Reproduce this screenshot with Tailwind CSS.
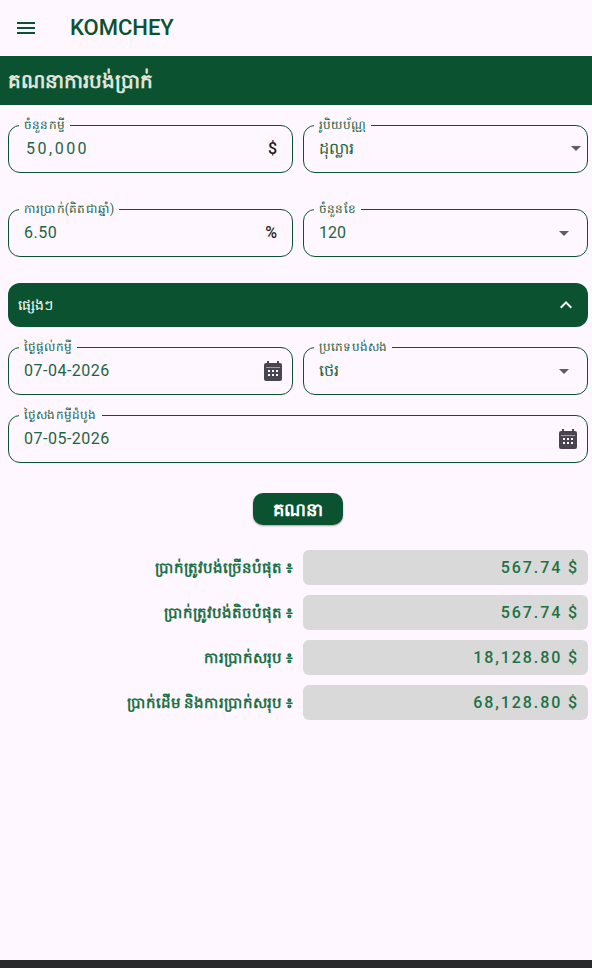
<!DOCTYPE html>
<html lang="km">
<head>
<meta charset="utf-8">
<script src="https://cdn.jsdelivr.net/npm/@tailwindcss/browser@4"></script>
</head>
<body class="bg-[#fef7ff] font-[Roboto,'Noto_Sans',sans-serif]">
<div class="w-[592px] h-[968px] flex flex-col overflow-hidden">
  <header class="h-14 flex items-center shrink-0">
    <svg class="w-6 h-6 ml-[14px] text-[#0b5330]" viewBox="0 0 24 24" fill="currentColor"><path d="M3 18h18v-2H3v2zm0-5h18v-2H3v2zm0-7v2h18V6H3z"/></svg>
    <span class="ml-[32px] -mt-[2px] text-[22px] font-medium text-[#0b5330]">KOMCHEY</span>
  </header>
  <div class="h-[49px] bg-[#0b5330] flex items-center pl-2 shrink-0 text-[20px] font-bold text-[#dfe3dc]">គណនាការបង់ប្រាក់</div>

  <div class="flex-1 pl-2 pr-1 flex flex-col">
    <div class="grid grid-cols-2 gap-x-[10px] mt-5">
      <div class="relative h-12 border border-[#0b5330] rounded-xl flex items-center pl-[17px] pr-[15px]">
        <span class="absolute left-[10px] -top-[9px] px-[5px] bg-[#fef7ff] text-[12px] tracking-[0.2px] leading-4 text-[#1f6343]">ចំនួនកម្ចី</span>
        <span class="flex-1 text-[16px] tracking-[2.5px] text-[#1f6343]">50,000</span>
        <span class="text-[16px] font-medium text-[#1d1b20]">$</span>
      </div>
      <div class="relative h-12 border border-[#0b5330] rounded-xl flex items-center pl-[15px]">
        <span class="absolute left-[10px] -top-[9px] px-[5px] bg-[#fef7ff] text-[12px] tracking-[0.2px] leading-4 text-[#1f6343]">រូបិយប័ណ្ណ</span>
        <span class="flex-1 text-[16px] text-[#1f6343]">ដុល្លារ</span>
        <svg class="w-6 h-6 text-[#5f5d62] -mt-[2px] -mr-[1px]" viewBox="0 0 24 24" fill="currentColor"><path d="M7 10l5 5 5-5z"/></svg>
      </div>
    </div>

    <div class="grid grid-cols-2 gap-x-[10px] mt-9">
      <div class="relative h-12 border border-[#0b5330] rounded-xl flex items-center pl-[15px] pr-[15px]">
        <span class="absolute left-[10px] -top-[9px] px-[5px] bg-[#fef7ff] text-[12px] tracking-[0.2px] leading-4 text-[#1f6343]">ការប្រាក់(គិតជាឆ្នាំ)</span>
        <span class="flex-1 text-[16px] tracking-[0.5px] text-[#1f6343]">6.50</span>
        <span class="text-[16px] font-medium text-[#1d1b20]">%</span>
      </div>
      <div class="relative h-12 border border-[#0b5330] rounded-xl flex items-center pl-[15px] pr-[11px]">
        <span class="absolute left-[10px] -top-[9px] px-[5px] bg-[#fef7ff] text-[12px] tracking-[0.2px] leading-4 text-[#1f6343]">ចំនួនខែ</span>
        <span class="flex-1 text-[16px] text-[#1f6343]">120</span>
        <svg class="w-6 h-6 text-[#5f5d62]" viewBox="0 0 24 24" fill="currentColor"><path d="M7 10l5 5 5-5z"/></svg>
      </div>
    </div>

    <div class="mt-[26px] h-11 bg-[#0b5330] rounded-xl flex items-center justify-between pl-[10px] pr-[10px] text-white">
      <span class="text-[14px]">ផ្សេងៗ</span>
      <svg class="w-6 h-6" viewBox="0 0 24 24" fill="currentColor"><path d="M7.41 15.41 12 10.83l4.59 4.58L18 14l-6-6-6 6z"/></svg>
    </div>

    <div class="grid grid-cols-2 gap-x-[10px] mt-5">
      <div class="relative h-12 border border-[#0b5330] rounded-xl flex items-center pl-[15px] pr-[7px]">
        <span class="absolute left-[10px] -top-[9px] px-[5px] bg-[#fef7ff] text-[12px] tracking-[0.2px] leading-4 text-[#1f6343]">ថ្ងៃផ្តល់កម្ចី</span>
        <span class="flex-1 text-[16px] tracking-[0.5px] text-[#1f6343]">07-04-2026</span>
        <svg class="w-6 h-6 text-[#49454f]" viewBox="0 0 24 24" fill="currentColor"><path fill-rule="evenodd" d="M19 4h-1V2h-2v2H8V2H6v2H5a2 2 0 0 0-2 2v14a2 2 0 0 0 2 2h14a2 2 0 0 0 2-2V6a2 2 0 0 0-2-2zM5 8.5h14V9H5zM7 11h2v2H7zm4 0h2v2h-2zm4 0h2v2h-2zM7 15h2v2H7zm4 0h2v2h-2zm4 0h2v2h-2z"/></svg>
      </div>
      <div class="relative h-12 border border-[#0b5330] rounded-xl flex items-center pl-[15px] pr-[11px]">
        <span class="absolute left-[10px] -top-[9px] px-[5px] bg-[#fef7ff] text-[12px] tracking-[0.2px] leading-4 text-[#1f6343]">ប្រភេទបង់សង</span>
        <span class="flex-1 text-[16px] text-[#1f6343]">ថេរ</span>
        <svg class="w-6 h-6 text-[#5f5d62]" viewBox="0 0 24 24" fill="currentColor"><path d="M7 10l5 5 5-5z"/></svg>
      </div>
    </div>

    <div class="relative h-12 mt-5 border border-[#0b5330] rounded-xl flex items-center pl-[15px] pr-[7px]">
      <span class="absolute left-[10px] -top-[9px] px-[5px] bg-[#fef7ff] text-[12px] tracking-[0.2px] leading-4 text-[#1f6343]">ថ្ងៃសងកម្ចីដំបូង</span>
      <span class="flex-1 text-[16px] tracking-[0.5px] text-[#1f6343]">07-05-2026</span>
      <svg class="w-6 h-6 text-[#49454f]" viewBox="0 0 24 24" fill="currentColor"><path fill-rule="evenodd" d="M19 4h-1V2h-2v2H8V2H6v2H5a2 2 0 0 0-2 2v14a2 2 0 0 0 2 2h14a2 2 0 0 0 2-2V6a2 2 0 0 0-2-2zM5 8.5h14V9H5zM7 11h2v2H7zm4 0h2v2h-2zm4 0h2v2h-2zM7 15h2v2H7zm4 0h2v2h-2zm4 0h2v2h-2z"/></svg>
    </div>

    <div class="flex justify-center mt-[30px]">
      <div class="w-[90px] h-8 bg-[#0b5330] rounded-[10px] shadow-[0_1px_2px_rgba(0,0,0,0.35)] flex items-center justify-center text-white text-[18px] font-bold">គណនា</div>
    </div>

    <div class="mt-[25px] flex flex-col gap-[10px]">
      <div class="grid grid-cols-2 gap-x-[10px] items-center">
        <span class="text-right pt-[2px] text-[15px] font-bold text-[#1c7146]">ប្រាក់ត្រូវបង់ច្រើនបំផុត ៖</span>
        <span class="h-[35px] bg-[#d9d9d9] rounded-md flex items-center justify-end pr-[9px] text-[16px] font-medium tracking-[1.9px] text-[#1c7146]">567.74 $</span>
      </div>
      <div class="grid grid-cols-2 gap-x-[10px] items-center">
        <span class="text-right pt-[2px] text-[15px] font-bold text-[#1c7146]">ប្រាក់ត្រូវបង់តិចបំផុត ៖</span>
        <span class="h-[35px] bg-[#d9d9d9] rounded-md flex items-center justify-end pr-[9px] text-[16px] font-medium tracking-[1.9px] text-[#1c7146]">567.74 $</span>
      </div>
      <div class="grid grid-cols-2 gap-x-[10px] items-center">
        <span class="text-right pt-[2px] text-[15px] font-bold text-[#1c7146]">ការប្រាក់សរុប ៖</span>
        <span class="h-[35px] bg-[#d9d9d9] rounded-md flex items-center justify-end pr-[9px] text-[16px] font-medium tracking-[1.9px] text-[#1c7146]">18,128.80 $</span>
      </div>
      <div class="grid grid-cols-2 gap-x-[10px] items-center">
        <span class="text-right pt-[2px] text-[15px] font-bold text-[#1c7146]">ប្រាក់ដើម និងការប្រាក់សរុប ៖</span>
        <span class="h-[35px] bg-[#d9d9d9] rounded-md flex items-center justify-end pr-[9px] text-[16px] font-medium tracking-[1.9px] text-[#1c7146]">68,128.80 $</span>
      </div>
    </div>
  </div>
  <div class="h-2 bg-[#28292b] shrink-0"></div>
</div>
</body>
</html>
